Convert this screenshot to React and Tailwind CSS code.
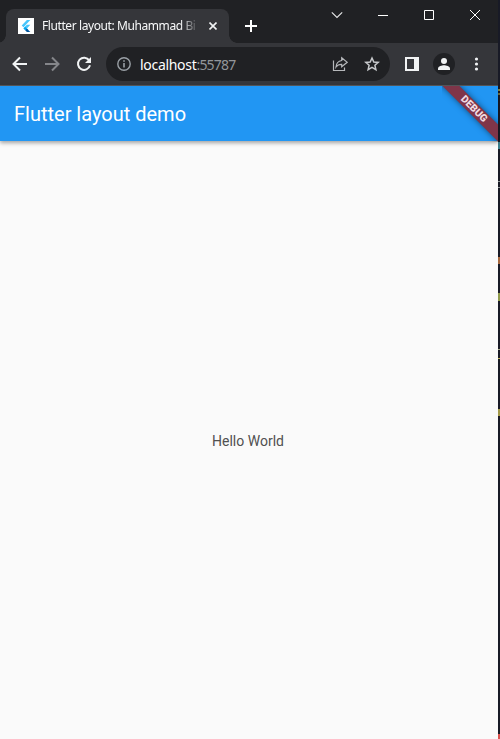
const sliverMarks = [
  { top: 89, height: 2, cls: 'bg-[#8f8a45]' },
  { top: 93, height: 2, cls: 'bg-[#77743f]' },
  { top: 142, height: 7, cls: 'bg-[#3b7f8c]' },
  { top: 181, height: 1, cls: 'bg-[#8b9293]' },
  { top: 187, height: 1, cls: 'bg-[#8b9293]' },
  { top: 257, height: 7, cls: 'bg-[#a5683f]' },
  { top: 293, height: 8, cls: 'bg-[#8f9a4c]' },
  { top: 349, height: 1, cls: 'bg-[#a8a98a]' },
  { top: 358, height: 1, cls: 'bg-[#b9b25c]' },
  { top: 409, height: 7, cls: 'bg-[#a39a4b]' },
  { top: 734, height: 5, cls: 'bg-[#d9534f]' },
];

function FlutterLogo() {
  return (
    <svg viewBox="0 0 16 16" className="size-4 shrink-0 bg-white">
      <path d="M8.9 2h3.4L5.5 9.2 3.7 7.5z" fill="#47c5fb" />
      <path d="M8.9 6.8h3.4L8.9 10.4l1.4 1.4-1.7 1.3-3.2-2.8z" fill="#47c5fb" />
      <path d="m7.2 12.2 1.7-1.7 3.4 3.5H8.9z" fill="#00569e" />
      <path d="M5.5 10.5 7.2 8.8l1.7 1.7-1.7 1.7z" fill="#00a6f0" />
    </svg>
  );
}

function TitleBar() {
  return (
    <div className="flex h-[43px] items-end bg-[#202124] pl-1.5">
      <div className="relative flex h-[34px] w-[223px] items-center rounded-t-lg bg-[#35363a] pl-3">
        <span className="absolute bottom-0 -left-2 size-2 bg-[radial-gradient(circle_at_0_0,transparent_7.5px,#35363a_8px)]" />
        <span className="absolute bottom-0 -right-2 size-2 bg-[radial-gradient(circle_at_100%_0,transparent_7.5px,#35363a_8px)]" />
        <FlutterLogo />
        <div className="ml-2 w-[155px] whitespace-nowrap font-['Noto_Sans',sans-serif] text-[12px] tracking-[-0.41px] text-[#f8f9fa] [mask-image:linear-gradient(to_right,black_138px,transparent_157px)]">
          Flutter layout: Muhammad Bi
        </div>
        <svg viewBox="0 0 8 8" className="ml-3 size-2" stroke="#f1f3f4" strokeWidth="1.6">
          <path d="M.5.5l7 7M7.5.5l-7 7" />
        </svg>
      </div>
      <svg viewBox="0 0 12 12" className="mb-[11px] ml-4 size-3" stroke="#fff" strokeWidth="2">
        <path d="M6 0v12M0 6h12" />
      </svg>
      <div className="ml-auto flex h-full items-start gap-9 pt-2.5 pr-[18px]">
        <svg viewBox="0 0 10 10" className="size-2.5 overflow-visible" fill="none" stroke="#e8e9ea" strokeWidth="1.1">
          <path d="M-.2 2.3 5 7.5l5.2-5.2" />
        </svg>
        <svg viewBox="0 0 10 10" className="size-2.5" stroke="#fff">
          <path d="M0 5.5h10" />
        </svg>
        <svg viewBox="0 0 10 10" className="size-2.5" fill="none" stroke="#fff">
          <path d="M.5.5h9v9h-9z" />
        </svg>
        <svg viewBox="0 0 10 10" className="size-2.5" stroke="#fff">
          <path d="M0 0l10 10M10 0L0 10" />
        </svg>
      </div>
    </div>
  );
}

function Toolbar() {
  return (
    <div className="flex h-[43px] items-center border-b border-[#57585b] bg-[#35363a] pl-3">
      <svg viewBox="0 0 16 16" className="size-4" fill="none" stroke="#f1f3f4" strokeWidth="2">
        <path d="M15 8H2.5M8 1.5L1.5 8 8 14.5" />
      </svg>
      <svg viewBox="0 0 16 16" className="ml-4 size-4" fill="none" stroke="#85868a" strokeWidth="2">
        <path d="M1 8h12.5M8 1.5L14.5 8 8 14.5" />
      </svg>
      <svg viewBox="0 0 16 16" className="ml-4 size-4" fill="none">
        <path d="M13.2 4.4A6.1 6.1 0 1 0 14 9.3" stroke="#f1f3f4" strokeWidth="2" />
        <path d="M15 1v6H9z" fill="#f1f3f4" />
      </svg>
      <div className="ml-[14px] flex h-[34px] w-[284px] items-center rounded-full bg-[#202124] pr-2.5 pl-[11px]">
        <svg viewBox="0 0 14 14" className="size-3.5" fill="none" stroke="#9aa0a6" strokeWidth="1.4">
          <circle cx="7" cy="7" r="6.2" />
          <path d="M7 6v4.5M7 3.3v1.5" strokeWidth="1.6" />
        </svg>
        <div className="ml-[9px] font-['Noto_Sans',sans-serif] text-[14px] tracking-[-0.3px] text-white">
          localhost<span className="tracking-[-0.8px] text-[#93969a]">:55787</span>
        </div>
        <svg viewBox="0 0 16 16" className="ml-auto size-4" fill="none" stroke="#b6b8bb" strokeWidth="1.2">
          <path d="M1.5 4.5v10h11V11.5" />
          <path d="M9.7 1.8 15.2 6.3l-5.5 4.5V8.3C7.2 8.2 5.4 9 4 11c.3-3.5 2.2-6 5.7-6.5z" />
        </svg>
        <svg viewBox="0 0 16 16" className="ml-4 size-4" fill="none" stroke="#c7c9cc" strokeWidth="1.5">
          <path d="M8 2l1.8 4 4.4.4-3.3 2.9 1 4.3L8 11.3l-3.9 2.3 1-4.3L1.8 6.4l4.4-.4z" />
        </svg>
      </div>
      <svg viewBox="0 0 14 14" className="ml-[15px] size-3.5">
        <path d="M0 0h14v14H0z" fill="#f1f3f4" />
        <path d="M2 2h7v10H2z" fill="#35363a" />
      </svg>
      <div className="ml-3.5 flex size-[22px] items-center justify-center rounded-full bg-[#202124]">
        <svg viewBox="0 0 12 12" className="size-3" fill="#f1f3f4">
          <circle cx="6" cy="3" r="3" />
          <path d="M0 12v-1.5C0 8.4 4 7.3 6 7.3s6 1.1 6 3.2V12z" />
        </svg>
      </div>
      <svg viewBox="0 0 4 14" className="ml-[19px] h-3.5 w-1 overflow-visible" fill="#f1f3f4">
        <circle cx="2.5" cy="2" r="1.6" />
        <circle cx="2.5" cy="7" r="1.6" />
        <circle cx="2.5" cy="12" r="1.6" />
      </svg>
    </div>
  );
}

function DebugBanner() {
  return (
    <div className="absolute top-0 right-0 size-14 overflow-hidden">
      <div className="absolute top-[17px] left-[-18px] flex h-3 w-[100px] rotate-45 items-center justify-center bg-[#7f3549] font-[Roboto,sans-serif] text-[10.2px] leading-none font-black text-[#f0dce2] shadow-[0_0_6px_rgba(0,0,0,0.5)]">
        DEBUG
      </div>
    </div>
  );
}

export default function App() {
  return (
    <div className="flex h-[739px] w-[500px] overflow-hidden bg-[#181a26]">
      <div className="flex w-[498px] shrink-0 flex-col">
        <TitleBar />
        <Toolbar />
        <div className="relative z-10 flex h-[55px] items-center bg-[#2196f3] pl-3.5 font-[Roboto,sans-serif] text-white shadow-[0_2px_4px_rgba(0,0,0,0.35)]">
          <h1 className="text-[20px] font-normal">Flutter layout demo</h1>
          <DebugBanner />
        </div>
        <div className="flex flex-1 items-center justify-center bg-[#fafafa] pt-0.5 pr-0.5 font-[Roboto,sans-serif] text-[14px] text-[#505050]">
          Hello World
        </div>
      </div>
      <div className="relative w-0.5 bg-[#181a26]">
        {sliverMarks.map((m) => (
          <span
            key={m.top}
            className={`absolute left-0 w-full ${m.cls}`}
            style={{ top: m.top, height: m.height }}
          />
        ))}
      </div>
    </div>
  );
}
